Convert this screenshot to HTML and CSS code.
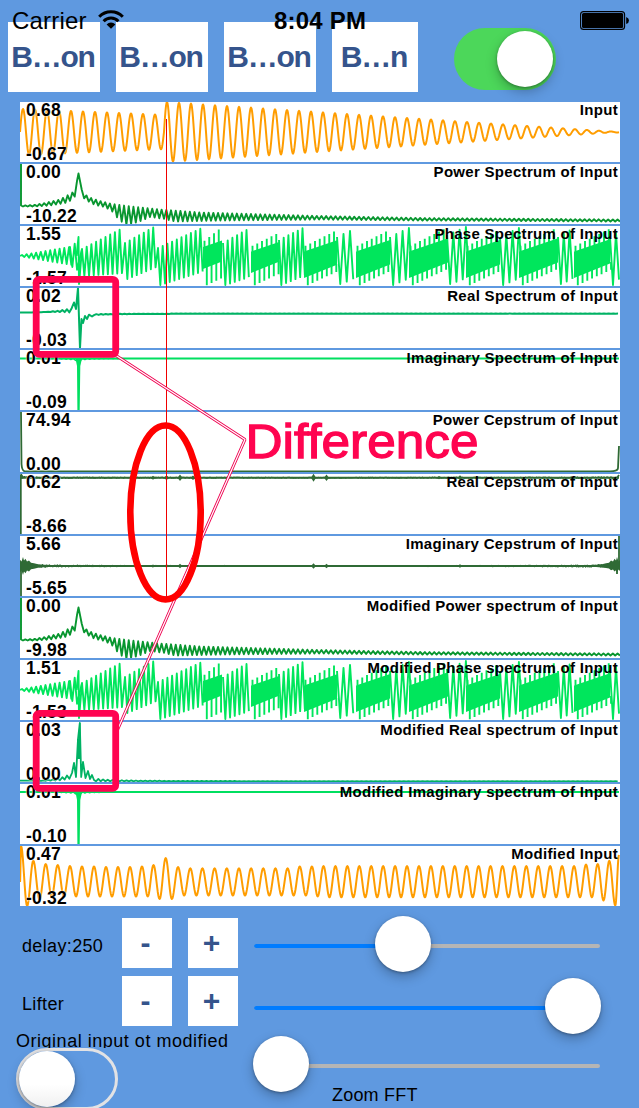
FILE: index.html
```html
<!DOCTYPE html>
<html lang="en">
<head>
<meta charset="utf-8">
<title>Cepstrum</title>
<link rel="stylesheet" href="styles.css">
</head>
<body>
<div class="screen">
  <header class="status">
    <span class="carrier">Carrier</span>
    <svg class="wifi" width="26" height="20" viewBox="0 0 26 20"><path d="M1.2 6.8a16.500 16.500 0 0 1 23.600 0M5.600 11.200a10.400 10.400 0 0 1 14.800 0" fill="none" stroke="#000" stroke-width="3"/><path d="M13 18.800 8.600 14.400a6.200 6.200 0 0 1 8.800 0z"/></svg>
    <span class="time">8:04 PM</span>
    <svg class="battery" width="50" height="20" viewBox="0 0 50 20"><rect x=".6" y=".6" width="44" height="17.800" rx="3" fill="none" stroke="#000" stroke-width="1.100"/><rect x="2" y="2" width="41.200" height="15" rx="1.600"/><path d="M46.200 6q2.800 1 2.800 3.500T46.200 13z"/></svg>
  </header>
  <nav class="toolbar">
    <button class="btn">B…on</button>
    <button class="btn">B…on</button>
    <button class="btn">B…on</button>
    <button class="btn btn-short">B…n</button>
    <div class="switch on"><i class="knob"></i></div>
  </nav>
  <main class="plots" id="plots"></main>
  <footer class="controls">
    <div class="row">
      <span class="name">delay:250</span><button class="step">-</button><button class="step">+</button>
      <div class="slider"><i class="fill" style="width:149px"></i><i class="knob" style="left:121px"></i></div>
    </div>
    <div class="row second">
      <span class="name">Lifter</span><button class="step">-</button><button class="step">+</button>
      <div class="slider low"><i class="fill" style="width:346px"></i><i class="knob" style="left:291px"></i></div>
    </div>
    <div class="bottom">
      <div class="original">
        <div class="caption">Original input ot modified</div>
        <div class="switch off"><i class="knob"></i></div>
      </div>
      <div class="zoom">
        <div class="slider"><i class="knob" style="left:-1px"></i></div>
        <div class="zoom-label">Zoom FFT</div>
      </div>
    </div>
  </footer>
  <svg class="notes" width="639" height="1108" viewBox="0 0 639 1108" fill="none">
    <path d="M166.500 119V597" stroke="#f00000" stroke-width="1"/>
    <g stroke-linejoin="bevel">
      <path d="M116 355.500 245 439.500 117 731" stroke="#f00050" stroke-width="3"/>
      <path d="M116 355.500 245 439.500 117 731" stroke="#fff" stroke-width="1.200"/>
    </g>
    <rect x="36.200" y="279.300" width="79.500" height="75" rx="3" stroke="#ff0450" stroke-width="6.800"/>
    <rect x="36.200" y="713.300" width="79.500" height="75" rx="3" stroke="#ff0450" stroke-width="6.800"/>
    <ellipse cx="165.500" cy="512.500" rx="35.200" ry="87" stroke="#f00" stroke-width="6.600"/>
    <text class="note" x="245.500" y="458" textLength="233" lengthAdjust="spacingAndGlyphs">Difference</text>
  </svg>
</div>
<script src="plots.js"></script>
</body>
</html>
```
FILE: styles.css
```css
* { box-sizing: border-box; }
body { margin: 0; font-family: "Liberation Sans", Arial, sans-serif; }
.screen { position: relative; width: 639px; height: 1108px; overflow: hidden; background: #5f99e0; color: #000; }

.status { position: absolute; z-index: 2; top: 9px; left: 12px; width: 627px; height: 24px; display: flex; align-items: center; line-height: 24px; font-size: 24px; }
.carrier { width: 86px; letter-spacing: .2px; }
.wifi { margin-top: -2px; }
.time { margin-left: 150px; width: 100px; white-space: nowrap; font-size: 24px; font-weight: bold; letter-spacing: .2px; }
.battery { margin: -1px 0 0 206px; }

.toolbar { display: flex; height: 102px; padding: 22px 0 0 8px; gap: 16px; }
.btn, .step { border: 0; padding: 0; background: #fff; color: #35548c; font-family: inherit; font-weight: bold; text-align: center; }
.btn { width: 92px; height: 70px; font-size: 30px; letter-spacing: -1.200px; padding-right: 2px; }
.btn-short { width: 86px; }

.switch { position: relative; width: 102px; height: 62px; border-radius: 31px; }
.knob { position: absolute; width: 56px; height: 56px; border-radius: 50%; background: #fff; box-shadow: 0 5px 12px rgba(0,0,0,.25), 0 1px 3px rgba(0,0,0,.3); }
.switch.on { margin: 6px 0 0 20px; background: #4cd75a; }
.switch.on .knob { left: 43px; top: 3px; }
.switch.off { border: 3px solid #e2e2e4; }
.switch.off .knob { left: 0; top: 0; background: linear-gradient(#fff 60%, #f0f0f0); }

.plots { display: flex; flex-direction: column; gap: 2px; width: 600px; margin-left: 20px; }
.plot { position: relative; height: 60px; background: #fff; }
.plot svg { display: block; }
.value, .title { position: absolute; line-height: 18px; white-space: nowrap; font-weight: bold; }
.value { left: 6px; font-size: 17.500px; letter-spacing: .2px; text-shadow: 0 0 1px #fff, 0 0 2px #fff; }
.max { top: -1px; }
.min { bottom: -1px; }
.title { right: 2px; top: -1px; font-size: 15px; letter-spacing: .3px; }

.controls { padding-top: 12px; }
.row { display: flex; height: 50px; padding-left: 22px; }
.second { margin-top: 8px; }
.name { width: 100px; line-height: 56px; font-size: 18px; letter-spacing: .35px; }
.step { width: 50px; height: 50px; margin-right: 16px; padding-right: 3px; font-size: 30px; line-height: 50px; }
.slider { position: relative; width: 346px; height: 4px; margin-top: 26px; border-radius: 2px; background: #b5b5b5; }
.slider.low { margin-top: 30px; }
.fill { display: block; height: 4px; border-radius: 2px; background: #007cff; }
.slider .knob { top: -28px; }
.bottom { display: flex; }
.original { width: 238px; padding-left: 16px; }
.caption { height: 22px; padding-top: 5px; overflow: hidden; line-height: 20px; font-size: 18px; letter-spacing: .520px; white-space: nowrap; }
.zoom { padding: 12px 0 0 16px; }
.zoom-label { padding: 17px 0 0 78px; line-height: 20px; font-size: 18px; letter-spacing: .2px; }

.notes { position: absolute; inset: 0; z-index: 3; pointer-events: none; }
.note { font-size: 48.500px; fill: #ff0450; stroke: #ff0450; stroke-width: 1.300px; }
```
FILE: plots.js
```js
const line = pts => 'M' + pts.map(p => p[0].toFixed(2) + ' ' + p[1].toFixed(2)).join('L');
const stroke = (d, color, w = 2) => `<path d="${d}" fill="none" stroke="${color}" stroke-width="${w}" stroke-linejoin="round"/>`;

// Linear interpolation over a table of [x, y] knots.
function lerp(table, x) {
  for (let i = 1; i < table.length; i++) {
    const [x0, y0] = table[i - 1], [x1, y1] = table[i];
    if (x <= x1) return y0 + (y1 - y0) * (x - x0) / (x1 - x0);
  }
  return table[table.length - 1][1];
}
// Repeatable noise in -1..1.
function noise(i) { const v = Math.sin(i * 127.1 + 3.7) * 43758.5453; return 2 * (v - Math.floor(v)) - 1; }

function input() {
  const pts = [];
  for (let x = 0; x <= 599; x += .5) {
    const amp = x < 143.8 ? 23.2 - x * .042 : Math.max(30 * (1 - (x - 146) / 452), .5);
    pts.push([x, 30 - amp * Math.sin(2 * Math.PI * x / 12)]);
  }
  return stroke(line(pts), '#ff9d00', 2);
}

function modifiedInput() {
  const peaks = [[1, 0], [13.3, 14.7], [25.7, 18], [37.7, 19], [50, 20], [62, 20.5], [74, 20.5], [86, 21], [98, 21], [110, 21], [122, 20.5], [133.5, 19], [145.7, 12], [158, 21]];
  for (let x = 170.3; x < 295; x += 12.16) peaks.push([x, x > 270 ? 20.5 : 22.3]);
  for (let x = 303.5; x < 560; x += 11.93) peaks.push([x, 20]);
  peaks.push([566, 18.5], [577.7, 18], [589.3, 14.8], [599, 9]);
  const knots = [[0, 36]];
  peaks.forEach((p, i) => {
    knots.push(p);
    const n = peaks[i + 1];
    if (!n) return;
    let y = 50.5;
    if (i === 0) y = 60; else if (i === 1) y = 53.5; else if (i === 11 || i === 12) y = 53;
    else if (i > 12 && p[0] < 290) y = 49.5;
    else if (i === peaks.length - 2) y = 59.5; else if (i === peaks.length - 3) y = 54.5; else if (p[0] > 300) y = 51.3;
    knots.push([i === peaks.length - 2 ? 595.3 : (p[0] + n[0]) / 2, y]);
  });
  const pts = [];
  for (let i = 1; i < knots.length; i++) {
    const [x0, y0] = knots[i - 1], [x1, y1] = knots[i];
    for (let t = 0; t < 1; t += .1) pts.push([x0 + (x1 - x0) * t, y0 + (y1 - y0) * (1 - Math.cos(Math.PI * t)) / 2]);
  }
  pts.push(knots[knots.length - 1]);
  return stroke(line(pts), '#ff9d00', 2);
}

function power() {
  const top = [[2, 41.5], [14, 41], [25, 39], [40, 35.5], [50, 30], [55, 27], [58.5, 9.5], [62, 27], [68, 33], [80, 37], [92, 40], [115, 43], [140, 45.500], [180, 48.500], [300, 52], [400, 54], [600, 55.500]];
  const low = [[2, 42.5], [14, 42.5], [30, 41.5], [45, 39], [52, 36], [56, 31], [58.5, 10], [60.5, 31], [66, 36], [75, 41], [85, 43], [93, 48], [99, 56], [107, 61], [118, 58], [130, 53], [145, 55], [155, 57.5], [200, 56.500], [300, 55.500], [400, 56.500], [600, 57.500]];
  const pts = [[1, 0], [1, 41.5]];
  for (let x = 3; x < 600; x += 2.35) {
    const i = pts.length;
    const peak = Math.abs(x - 58.5) < 1.17;
    pts.push([peak ? 58.5 : x, peak ? 9.5 : lerp(i % 2 ? top : low, x)]);
  }
  return stroke(line(pts), '#08962f', 1.9);
}

function phase() {
  const color = '#00e65c';
  let out = '';
  // x0, x1, upper start/end, lower start/end, tooth period
  const open = [
    [2, 50, 29, 21, 31, 39, 4.7], [50, 57, 21, 16, 41, 45, 4.7], [62, 101, 23, 3, 50, 47, 4.7],
    [105, 134, 17, 1, 53, 41, 4.7], [138, 182, 22, 2, 59, 45, 4.7],
    [203, 230, 17, 2, 59, 50, 4.7], [259, 283, 14, 2, 59, 49, 4.7], [317, 336, 11, 2, 58, 51, 6.5],
    [370, 389, 11, 2, 59, 51, 6.3], [427, 446, 9, 1, 58, 51, 6.3], [480, 499, 11, 2, 59, 51, 6.3],
    [538, 554, 11, 2, 58, 51, 5.8], [590, 599, 11, 5, 59, 51, 6]
  ];
  const pts = [[0, 30]];
  for (const [a, b, u0, u1, l0, l1, period] of open) {
    for (let x = a; x < b; x += period) {
      const t = (x - a) / (b - a);
      pts.push([x, u0 + (u1 - u0) * t], [x + period / 2, l0 + (l1 - l0) * t]);
    }
    if (b > 180) out += stroke(line(pts.splice(0)), color, 1.9);
  }
  out += stroke('M56.5 30L58.5 11 59 58 62 23', color, 1.9);
  // Dense bands with teeth sticking out above and below.
  const dense = [[183, 202], [231, 259], [284, 317], [336, 370], [389, 428], [446, 480], [499, 538], [554, 590]];
  for (const [a, b] of dense) {
    const s = b - a, u = a < 200 ? 21 : 25.5, l = s < 25 ? 43 : s < 30 ? 47 : 52;
    out += `<path d="M${a} ${u}L${b} ${u - s * .34}V${l - s * .4}L${a} ${l}Z" fill="${color}"/>`;
    for (let x = a + 1.5; x < b; x += 4.75) {
      const t = x - a;
      const hi = Math.max(1, u - 5 - t * (s < 25 ? .8 : .5)), lo = 60 - t * .47;
      out += stroke(`M${x} ${u}V${hi}M${x + 2.3} ${l - t * .4 - 2}V${lo}`, color, 1.9);
    }
  }
  return out;
}

function realSpectrum() {
  const pts = [];
  for (let x = 0; x < 52; x += 2.35) pts.push([x, 24.5 - x * x * .0008 + (pts.length % 2 ? 1 : -1) * Math.pow(x / 52, 4) * 2.2]);
  pts.push([54, 14.5], [56, 21], [58, 0], [60, 60], [61.5, 31], [63, 35], [65, 28], [67, 31], [69, 26.7], [72, 28.5]);
  for (let x = 74; x <= 599; x += 2.35) pts.push([x, 25.6 + 20 / (x - 56) * (x < 150 ? 1 : .3) + (pts.length % 2 ? 1 : -1) * 9 / (x - 56)]);
  return stroke(line(pts), '#00b264', 2);
}

function imagSpectrum(base) {
  const ripple = stroke(line(Array.from({ length: 34 }, (_, i) => [i * 2.35 + 25, base + (i % 2) * Math.min(3, 14 / (Math.abs(i * 2.35 - 33.5) + 4))])), '#00df60', 1.2);
  return stroke(`M0 ${base}H599`, '#00df60', 1.9) + ripple + `<path d="M55.5 ${base}H62L60.3 16L59.7 60H57.4L57 16Z" fill="#00df60"/>`;
}

function modifiedReal() {
  const pts = [];
  for (let x = 0; x < 51; x += 2.35) pts.push([x, 58.7 - Math.pow(x / 50, 4) * 5 + (pts.length % 2 ? 1 : -.5) * Math.pow(x / 50, 3) * 3]);
  pts.push([52, 51], [54, 41], [56, 55], [58, 17], [59.8, 1], [61.2, 55], [63, 40], [65.5, 56], [68, 49], [70, 57], [72, 53], [74, 58]);
  for (let x = 76; x < 600; x += 2.35) pts.push([x, 59.3 - (pts.length % 2) * 45 / (x - 60)]);
  return stroke(line(pts), '#00b264', 1.8) + '<path d="M57 17H58.5L59.3 1H60.5V37H57Z" fill="#00b264"/>';
}

const dark = '#2f6a35';
function powerCepstrum() {
  return stroke('M1 0L1.5 52Q2 59.3 5 59.3H590Q598 59.3 598 56L599 34', dark, 1.8);
}

function cepstrumLine(base, wide) {
  const pts = [];
  for (let x = 0; x <= 599; x += .8) {
    let a = .5 + .6 * Math.exp(-Math.min(x, 600 - x) / 60);
    if (wide) a += .9 * Math.exp(-Math.min(x, 600 - x) / 35);
    pts.push([x, base + noise(pts.length) * a]);
  }
  let out = stroke(line(pts), dark, 1.2) + stroke(`M0 ${base}H599`, dark, 1.9);
  for (const [p, h] of [[133, 2], [146.5, 2.5], [160, 3.3], [173, 2.2], [293.5, 4], [306.5, 3.3], [440, 2.4], [419, 1.6]]) {
    const s = h * (wide ? .7 : 1);
    out += `<path d="M${p - 2.5} ${base}L${p} ${base - s}L${p + 2.5} ${base}L${p} ${base + s}Z" fill="${dark}"/>`;
  }
  return out;
}
const realCepstrum = () => cepstrumLine(3.7, false) + stroke('M.8 1V60M.8 0L3 3.5M597 4L599 1', dark, 1.8);
function imagCepstrum() {
  // Filled bursts at both ends of the trace.
  const burst = [[0, 7], [1.5, 5], [3, 10], [4, 6], [5.500, 8], [7, 5], [9, 6], [11, 3.5], [14, 3], [18, 2], [24, 1.5], [34, .8]];
  const shape = flip => {
    const at = x => flip ? 600 - x : x;
    const up = burst.map(([x, h]) => `${at(x)} ${30 - h * .9}`), down = burst.slice().reverse().map(([x, h]) => `${at(x)} ${30 + h * (flip ? .7 : .9)}`);
    return `<path d="M${up.join('L')}L${down.join('L')}Z" fill="${dark}"/>`;
  };
  return cepstrumLine(30, true) + shape(false) + shape(true) + stroke('M1 30V60M599 0V31M597 32V38', dark, 1.8);
}

const rows = [
  ['Input', '0.68', '-0.67', input],
  ['Power Spectrum of Input', '0.00', '-10.22', power],
  ['Phase Spectrum of Input', '1.55', '-1.57', phase],
  ['Real Spectrum of Input', '0.02', '-0.03', realSpectrum],
  ['Imaginary Spectrum of Input', '0.01', '-0.09', () => imagSpectrum(8.5)],
  ['Power Cepstrum of Input', '74.94', '0.00', powerCepstrum],
  ['Real Cepstrum of Input', '0.62', '-8.66', realCepstrum],
  ['Imaginary Cepstrum of Input', '5.66', '-5.65', imagCepstrum],
  ['Modified Power spectrum of Input', '0.00', '-9.98', power],
  ['Modified Phase spectrum of Input', '1.51', '-1.53', phase],
  ['Modified Real spectrum of Input', '0.03', '0.00', modifiedReal],
  ['Modified Imaginary spectrum of Input', '0.01', '-0.10', () => imagSpectrum(8)],
  ['Modified Input', '0.47', '-0.32', modifiedInput]
];
document.getElementById('plots').innerHTML = rows.map(([title, max, min, draw]) =>
  `<section class="plot"><svg width="600" height="60" viewBox="0 0 600 60">${draw()}</svg>` +
  `<span class="value max">${max}</span><span class="value min">${min}</span><span class="title">${title}</span></section>`).join('');
```
